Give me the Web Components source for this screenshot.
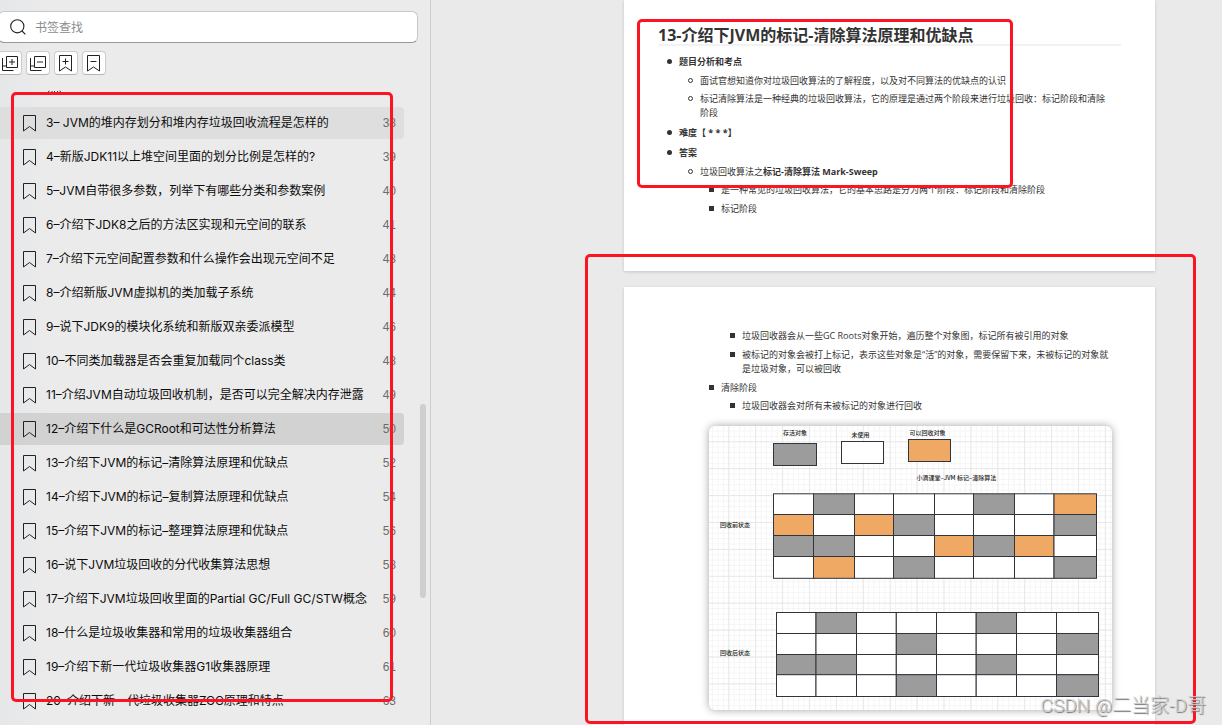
<!DOCTYPE html>
<html lang="zh-CN">
<head>
<meta charset="utf-8">
<title>JVM 文档阅读</title>
<style>
  html, body { height: 100%; margin: 0; }
  body { overflow: hidden; background: #eaeaea; font-family: "Liberation Sans", "Noto Sans CJK SC", sans-serif; }
</style>
</head>
<body>
<reader-app></reader-app>

<template id="tpl-app">
  <style>
    :host { display: grid; grid-template-columns: 431px minmax(0, 1fr); height: 100vh; overflow: hidden; position: relative; }
    .watermark { position: absolute; right: 16px; bottom: 6px; margin: 0; font: 300 19px/26px Roboto, "Noto Sans CJK SC", sans-serif; color: #cfcfcf; text-shadow: 1px 1px 1px #707070; white-space: nowrap; }
  </style>
  <bookmark-panel></bookmark-panel>
  <doc-viewer></doc-viewer>
  <p class="watermark">CSDN @二当家-D哥</p>
</template>

<template id="tpl-panel">
  <style>
    :host { display: flex; flex-direction: column; position: relative; min-height: 0; box-sizing: border-box; border-right: 1px solid #cdcdcd; background: linear-gradient(90deg, #e5e7e9, #ebebeb 50px); overflow: hidden; }
    .search { display: flex; align-items: center; gap: 9px; box-sizing: border-box; height: 32px; margin: 11px 12px 0 -2px; padding-left: 11px; background: #fff; border: 1px solid #c8c8c8; border-bottom-color: #989898; border-radius: 6px; }
    .search svg { flex: none; }
    input { flex: 1; min-width: 0; border: 0; padding: 2px 0 0; outline: 0; background: none; color: #222; font: 12px/18px "Liberation Sans", "Noto Sans CJK SC", sans-serif; }
    input::placeholder { color: #8c8c8c; opacity: 1; }
    .tools { display: flex; gap: 4px; margin: 8px 0 0 -2px; }
    .scroll { flex: 1; display: flex; min-height: 0; margin-top: 15px; overflow: hidden; }
    .list { flex: 1; min-width: 0; }
    .sliver { display: block; height: 3px; margin: 0 0 14px 47px; }
    .track { width: 6px; margin: 314px 4px 0 16px; height: 194px; border-radius: 3px; background: #cfcfcf; }
    mark-frame { left: 11px; top: 92px; width: 382px; height: 610px; }
  </style>
  <label class="search">
    <svg width="16" height="16" viewBox="0 0 16 16" fill="none" stroke="#222" stroke-width="1.1"><circle cx="7.3" cy="7.3" r="6.6"/><path d="M12 12l3.4 3.4"/></svg>
    <input type="text" placeholder="书签查找" aria-label="书签查找">
  </label>
  <div class="tools">
    <tool-button name="展开"><svg width="19" height="19" viewBox="0 0 19 19"><path d="M5.5 2.5h11v11h-11zM11 5v6M8 8h6M1.5 4v12.5h11M1.5 12h4"/></svg></tool-button>
    <tool-button name="收起"><svg width="19" height="19" viewBox="0 0 19 19"><path d="M5.5 2.5h11v11h-11zM8 8h6M1.5 4v12.5h11M1.5 12h4"/></svg></tool-button>
    <tool-button name="添加书签"><svg width="19" height="19" viewBox="0 0 19 19"><path d="M2.5 1.500v15.500l6-4 6 4V1.500zM8.500 4.500v6M5.500 7.500h6"/></svg></tool-button>
    <tool-button name="删除书签"><svg width="19" height="19" viewBox="0 0 19 19"><path d="M2.500 1.500v15.500l6-4 6 4V1.500zM5.500 7.500h6"/></svg></tool-button>
  </div>
  <div class="scroll">
    <div class="list">
      <svg class="sliver" width="15" height="3" viewBox="0 0 15 3" aria-hidden="true"><path d="M1 2l1.500-1M4.500 1.500h1M7 2l1-1M10 1.500h1M12.500 1l1.500 1" stroke="#333" fill="none"/></svg>
      <nav aria-label="书签"></nav>
    </div>
    <div class="track"></div>
  </div>
  <mark-frame></mark-frame>
</template>

<template id="tpl-tool">
  <style>
    :host { display: block; }
    button { display: flex; align-items: center; justify-content: center; width: 24px; height: 24px; padding: 0; border: 1px solid #cbcbcb; border-bottom-color: #b4b4b4; border-radius: 4px; background: #fff; }
    ::slotted(svg) { fill: none; stroke: #222; stroke-width: 1; }
  </style>
  <button type="button"><slot></slot></button>
</template>

<template id="tpl-item">
  <style>
    :host { display: block; height: 34px; }
    a { display: flex; align-items: center; height: 32px; padding: 0 8px 0 22px; border-radius: 0 4px 4px 0; color: #0c0c0c; text-decoration: none; font: 12px/18px Inter, "Noto Sans CJK SC", sans-serif; white-space: nowrap; }
    :host([state="hover"]) a { background: #dedede; }
    :host([state="current"]) a { background: #d2d2d2; }
    svg { flex: none; margin-right: 9px; }
    .title { flex: 1; }
    .num { color: #6c6c6c; font-family: "Liberation Sans", sans-serif; }
  </style>
  <a href="#"><svg width="15" height="17" viewBox="0 0 15 17" fill="none" stroke="#222"><path d="M1.500.500h12v15.500l-6-4.500-6 4.500z"/></svg><span class="title"><slot></slot></span><span class="num"></span></a>
</template>

<template id="tpl-frame">
  <style>
    :host { display: block; position: absolute; box-sizing: border-box; border: 3px solid #fd1423; border-radius: 5px; pointer-events: none; }
  </style>
</template>

<template id="tpl-viewer">
  <style>
    :host { display: block; position: relative; min-width: 0; overflow: hidden; background: #eaeaea; }
    .pages { display: flex; flex-direction: column; gap: 16px; padding: 0 67px 0 193px; }
    h2 { margin: 0 0 9px; padding-top: 26px; border-bottom: 2px solid #f2f2f2; font-size: 16px; line-height: 18px; color: #333; }
    ul { margin: 0; padding: 0 0 0 21px; list-style: none; display: grid; gap: 5px; }
    li::before { content: ""; display: inline-block; box-sizing: border-box; width: 5px; height: 5px; margin: 0 7px 0 -12px; vertical-align: 1px; }
    .top { gap: 6px; padding-right: 8px; }
    .top > li::before { background: #333; border-radius: 50%; }
    .circle { gap: 4px; margin-top: 5px; }
    .circle > li::before { border: 1px solid #333; border-radius: 50%; }
    li > .square { margin-top: 4px; }
    .square > li::before { background: #333; }
    .cont { margin-left: 42px; padding-right: 8px; }
    .square > .carry::before { content: none; }
    .carry > .square { margin-top: 0; }
    gc-diagram { margin: 13px 9px 0 51px; }
    .first { left: 206px; top: 19px; width: 376px; height: 169px; }
    .second { left: 154px; top: 254px; width: 611px; height: 470px; }
  </style>
  <div class="pages">
    <doc-page class="p1">
      <h2>13-介绍下JVM的标记-清除算法原理和优缺点</h2>
      <ul class="top">
        <li><b>题目分析和考点</b>
          <ul class="circle">
            <li>面试官想知道你对垃圾回收算法的了解程度，以及对不同算法的优缺点的认识</li>
            <li>标记清除算法是一种经典的垃圾回收算法，它的原理是通过两个阶段来进行垃圾回收：标记阶段和清除阶段</li>
          </ul>
        </li>
        <li><b>难度【 * * *】</b></li>
        <li><b>答案</b>
          <ul class="circle">
            <li>垃圾回收算法之<b>标记-清除算法 Mark-Sweep</b>
              <ul class="square">
                <li>是一种常见的垃圾回收算法，它的基本思路是分为两个阶段：标记阶段和清除阶段</li>
                <li>标记阶段</li>
              </ul>
            </li>
          </ul>
        </li>
      </ul>
    </doc-page>
    <doc-page>
      <ul class="square cont">
        <li class="carry">
          <ul class="square">
            <li>垃圾回收器会从一些GC Roots对象开始，遍历整个对象图，标记所有被引用的对象</li>
            <li>被标记的对象会被打上标记，表示这些对象是“活”的对象，需要保留下来，未被标记的对象就是垃圾对象，可以被回收</li>
          </ul>
        </li>
        <li>清除阶段
          <ul class="square">
            <li>垃圾回收器会对所有未被标记的对象进行回收</li>
          </ul>
        </li>
      </ul>
      <gc-diagram></gc-diagram>
    </doc-page>
  </div>
  <mark-frame class="first"></mark-frame>
  <mark-frame class="second"></mark-frame>
</template>

<template id="tpl-page">
  <style>
    :host { display: block; box-sizing: border-box; padding: 42px 34px 55px; background: #fff; box-shadow: 0 1px 3px rgba(0,0,0,.16); color: #333; font: 9px/14px "Open Sans", "Noto Sans CJK SC", sans-serif; }
    :host(.p1) { padding-top: 0; }
  </style>
  <slot></slot>
</template>

<template id="tpl-diagram">
  <style>
    :host { display: block; border-radius: 6px; overflow: hidden; background: #fff; box-shadow: 0 0 8px rgba(0,0,0,.36); }
    svg { display: block; width: 100%; height: auto; }
    text { font: 6px "Noto Sans CJK SC", sans-serif; font-weight: 500; fill: #222; }
  </style>
  <svg viewBox="0 0 403 284" role="img" aria-label="标记清除算法示意图">
    <defs>
      <pattern id="minor" width="5.38" height="5.38" patternUnits="userSpaceOnUse" x="19.3" y="15.3"><path d="M.5 0v5.38M0 .5h5.38" stroke="#f3f3f3" stroke-width=".8"/></pattern>
      <pattern id="major" width="26.9" height="26.9" patternUnits="userSpaceOnUse" x="19.3" y="15.3"><path d="M.5 0v26.9M0 .5h26.9" stroke="#e8e8e8" stroke-width="1"/></pattern>
    </defs>
    <rect width="403" height="284" fill="url(#minor)"/>
    <rect width="403" height="284" fill="url(#major)"/>
    <g stroke="#30343b" stroke-width="1">
      <rect x="64.5" y="17.500" width="43" height="22" fill="#9c9c9c"/>
      <rect x="132.5" y="15.500" width="42" height="22" fill="#fff"/>
      <rect x="199.5" y="13.500" width="42" height="22" fill="#efa964"/>
    </g>
    <g id="cells" stroke="#30343b" stroke-width="1"></g>
    <text x="74" y="9">存活对象</text>
    <text x="142.500" y="11">未使用</text>
    <text x="200.500" y="9">可以回收对象</text>
    <text x="207.500" y="54">小滴课堂–JVM 标记–清除算法</text>
    <text x="11" y="101">回收前状态</text>
    <text x="11" y="229">回收后状态</text>
  </svg>
</template>

<script>
  const attach = (host, id) => {
    const root = host.attachShadow({ mode: 'open' });
    root.append(document.getElementById(id).content.cloneNode(true));
    return root;
  };

  const BOOKMARKS = [
    ['3– JVM的堆内存划分和堆内存垃圾回收流程是怎样的', 38, 'hover'],
    ['4–新版JDK11以上堆空间里面的划分比例是怎样的?', 39],
    ['5–JVM自带很多参数，列举下有哪些分类和参数案例', 40],
    ['6–介绍下JDK8之后的方法区实现和元空间的联系', 41],
    ['7–介绍下元空间配置参数和什么操作会出现元空间不足', 43],
    ['8–介绍新版JVM虚拟机的类加载子系统', 44],
    ['9–说下JDK9的模块化系统和新版双亲委派模型', 46],
    ['10–不同类加载器是否会重复加载同个class类', 48],
    ['11–介绍JVM自动垃圾回收机制，是否可以完全解决内存泄露', 49],
    ['12–介绍下什么是GCRoot和可达性分析算法', 50, 'current'],
    ['13–介绍下JVM的标记–清除算法原理和优缺点', 52],
    ['14–介绍下JVM的标记–复制算法原理和优缺点', 54],
    ['15–介绍下JVM的标记–整理算法原理和优缺点', 56],
    ['16–说下JVM垃圾回收的分代收集算法思想', 58],
    ['17–介绍下JVM垃圾回收里面的Partial GC/Full GC/STW概念', 59],
    ['18–什么是垃圾收集器和常用的垃圾收集器组合', 60],
    ['19–介绍下新一代垃圾收集器G1收集器原理', 61],
    ['20–介绍下新一代垃圾收集器ZGC原理和特点', 63],
  ];

  customElements.define('mark-frame', class extends HTMLElement {
    constructor() { super(); attach(this, 'tpl-frame'); }
  });
  customElements.define('tool-button', class extends HTMLElement {
    connectedCallback() {
      if (this.shadowRoot) return;
      attach(this, 'tpl-tool').querySelector('button').setAttribute('aria-label', this.getAttribute('name'));
    }
  });
  customElements.define('bookmark-item', class extends HTMLElement {
    connectedCallback() {
      if (this.shadowRoot) return;
      attach(this, 'tpl-item').querySelector('.num').textContent = this.getAttribute('page');
    }
  });
  customElements.define('bookmark-panel', class extends HTMLElement {
    constructor() {
      super();
      const nav = attach(this, 'tpl-panel').querySelector('nav');
      for (const [title, page, state] of BOOKMARKS) {
        const item = document.createElement('bookmark-item');
        item.textContent = title;
        item.setAttribute('page', page);
        if (state) item.setAttribute('state', state);
        nav.append(item);
      }
    }
  });
  customElements.define('gc-diagram', class extends HTMLElement {
    constructor() {
      super();
      const g = attach(this, 'tpl-diagram').querySelector('#cells');
      const fills = { w: '#fff', g: '#9c9c9c', o: '#efa964' };
      const draw = (xs, ys, rows) => rows.forEach((row, r) => [...row].forEach((c, i) => {
        const el = document.createElementNS('http://www.w3.org/2000/svg', 'rect');
        const box = { x: xs[i], y: ys[r], width: xs[i + 1] - xs[i], height: ys[r + 1] - ys[r], fill: fills[c] };
        for (const k in box) el.setAttribute(k, box[k]);
        g.append(el);
      }));
      draw([64.5, 104.5, 145.5, 184.5, 225.5, 264.5, 305.5, 345, 387.5], [67.8, 88.5, 109.5, 130.5, 152.3],
        ['wgwwwgwo', 'owogwwwg', 'ggwwogow', 'wowgwwwg']);
      draw([67.5, 107, 147.5, 187.3, 227.5, 267.2, 307.5, 347.5, 389.5], [186.5, 207.5, 228.5, 248.7, 270.5],
        ['wgwwwgww', 'wwwgwwwg', 'ggwwwgww', 'wwwgwwwg']);
    }
  });
  customElements.define('doc-page', class extends HTMLElement {
    constructor() { super(); attach(this, 'tpl-page'); }
  });
  customElements.define('doc-viewer', class extends HTMLElement {
    constructor() { super(); attach(this, 'tpl-viewer'); }
  });
  customElements.define('reader-app', class extends HTMLElement {
    constructor() { super(); attach(this, 'tpl-app'); }
  });
</script>
</body>
</html>
